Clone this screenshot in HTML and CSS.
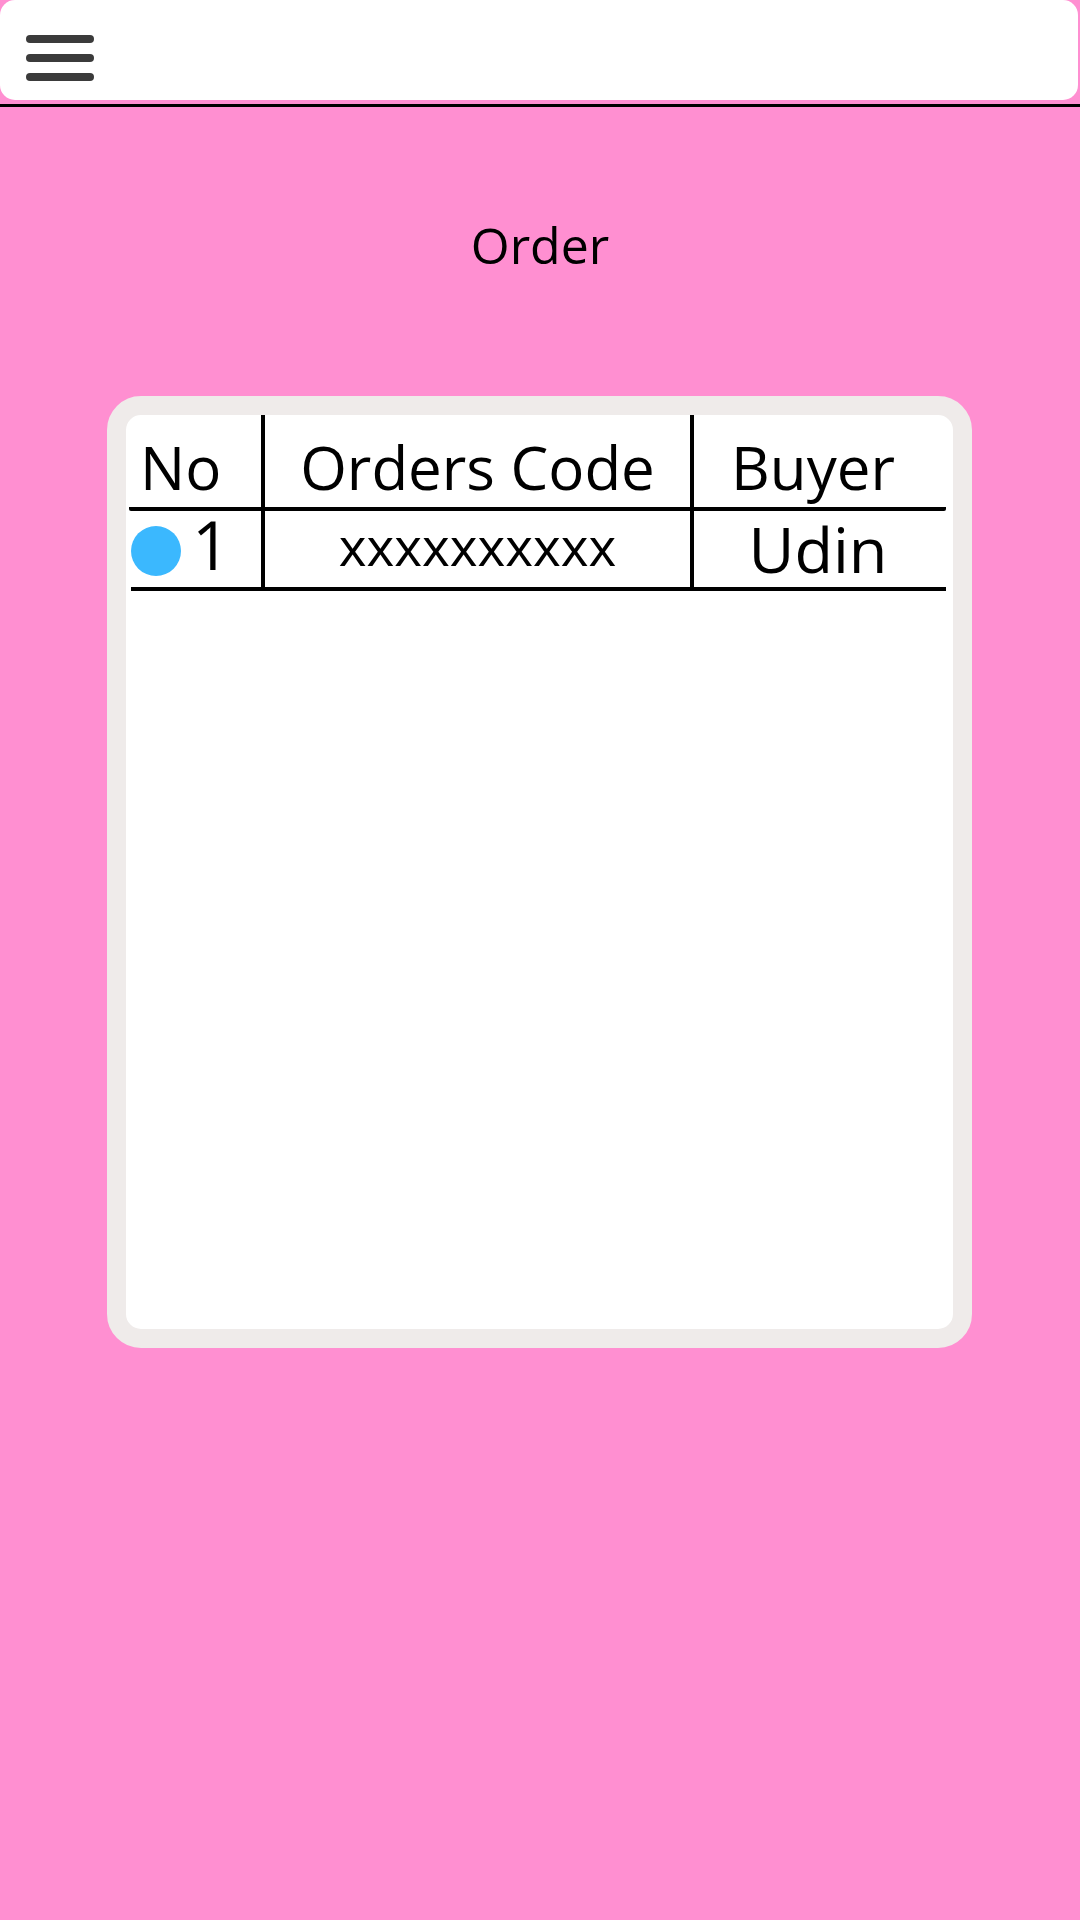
FILE: index.html
```html
<!DOCTYPE html>
<html>
<head>
<meta charset="utf-8">
<link rel="stylesheet" href="styles.css">
</head>
<body>
<header class="topbar">
  <div class="burger"><span></span><span></span><span></span></div>
</header>
<div class="rule"></div>
<h1 class="title">Order</h1>
<div class="card">
  <div class="table">
    <div class="row head">
      <div class="cell no">No</div>
      <div class="cell code">Orders Code</div>
      <div class="cell buyer">Buyer</div>
    </div>
    <div class="row item">
      <div class="cell no"><span class="dot"></span><span class="num">1</span></div>
      <div class="cell code"><span class="codetext">xxxxxxxxxx</span></div>
      <div class="cell buyer"><span class="name">Udin</span></div>
    </div>
  </div>
</div>
</body>
</html>
```

FILE: styles.css
```css
html, body {
  margin: 0;
  padding: 0;
}
body {
  background: #ff8fd1;
  font-family: "Open Sans", "Noto Sans", sans-serif;
  color: #000;
  width: 1080px;
  min-height: 1920px;
}
.topbar {
  height: 100px;
  margin-right: 2px;
  background: #ffffff;
  border-radius: 15px;
  box-sizing: border-box;
  padding: 35px 0 0 26px;
}
.burger {
  display: flex;
  flex-direction: column;
  gap: 11px;
  width: 68px;
}
.burger span {
  display: block;
  height: 8px;
  border-radius: 4px;
  background: #3b3b3b;
}
.rule {
  margin-top: 4px;
  height: 3px;
  background: #000;
}
.title {
  margin: 104px 0 0 0;
  text-align: center;
  font-weight: 400;
  font-size: 50px;
  line-height: normal;
}
.card {
  margin: 117px 0 0 107px;
  width: 865px;
  height: 952px;
  box-sizing: border-box;
  border: 19px solid #efebea;
  border-radius: 34px;
  background: #ffffff;
  overflow: hidden;
}
.table {
  margin-left: 3px;
  width: 817px;
}
.row {
  display: flex;
}
.row.head {
  height: 96px;
  box-sizing: border-box;
  border-bottom: 4px solid #000;
  border-radius: 0 0 2px 2px;
}
.row.item {
  height: 80px;
  box-sizing: border-box;
  border-bottom: 4px solid #000;
  margin-left: 2px;
}
.cell {
  box-sizing: border-box;
  white-space: nowrap;
}
.cell.no {
  width: 132px;
}
.row.item .cell.no {
  width: 130px;
}
.cell.code {
  width: 429px;
  border-left: 4px solid #000;
  text-align: center;
}
.cell.buyer {
  flex: 1;
  border-left: 4px solid #000;
  text-align: center;
}
.row.head .cell {
  font-size: 60px;
  line-height: 1.2;
  padding-top: 16px;
}
.row.head .cell.no {
  padding-left: 11px;
}
.row.head .cell.buyer {
  padding-right: 14px;
}
.row.item .cell.no {
  display: flex;
  align-items: flex-start;
}
.dot {
  width: 50px;
  height: 50px;
  border-radius: 50%;
  background: #3bb8fe;
  margin-top: 15px;
  margin-right: 11px;
  flex: none;
}
.num {
  font-size: 67px;
  line-height: 1;
}
.codetext {
  display: inline-block;
  font-size: 53px;
  line-height: 1;
  padding-top: 8px;
}
.name {
  display: inline-block;
  font-size: 63px;
  line-height: 1;
  padding-top: 6px;
}
.row.item .cell.buyer {
  padding-right: 4px;
}
```
